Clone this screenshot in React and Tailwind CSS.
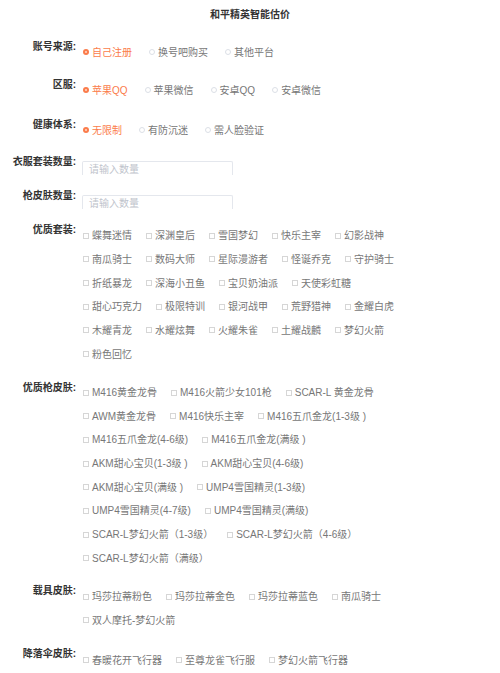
import React from 'react';

const font = { fontFamily: '"Liberation Sans", "Noto Sans CJK SC", sans-serif' };

const sections = {
  suits: ['蝶舞迷情', '深渊皇后', '雪国梦幻', '快乐主宰', '幻影战神', '南瓜骑士', '数码大师', '星际漫游者', '怪诞乔克', '守护骑士', '折纸暴龙', '深海小丑鱼', '宝贝奶油派', '天使彩虹糖', '甜心巧克力', '极限特训', '银河战甲', '荒野猎神', '金耀白虎', '木耀青龙', '水耀炫舞', '火耀朱雀', '土耀战麟', '梦幻火箭', '粉色回忆'],
  guns: ['M416黄金龙骨', 'M416火箭少女101枪', 'SCAR-L 黄金龙骨', 'AWM黄金龙骨', 'M416快乐主宰', 'M416五爪金龙(1-3级 )', 'M416五爪金龙(4-6级)', 'M416五爪金龙(满级 )', 'AKM甜心宝贝(1-3级 )', 'AKM甜心宝贝(4-6级)', 'AKM甜心宝贝(满级 )', 'UMP4雪国精灵(1-3级)', 'UMP4雪国精灵(4-7级)', 'UMP4雪国精灵(满级)', 'SCAR-L梦幻火箭（1-3级）', 'SCAR-L梦幻火箭（4-6级）', 'SCAR-L梦幻火箭（满级）'],
  cars: ['玛莎拉蒂粉色', '玛莎拉蒂金色', '玛莎拉蒂蓝色', '南瓜骑士', '双人摩托-梦幻火箭'],
  chutes: ['春暖花开飞行器', '至尊龙雀飞行服', '梦幻火箭飞行器'],
};

function Label({ children }) {
  return (
    <div className="w-[76px] shrink-0 text-right font-bold text-[10px] leading-[14px] text-[#333]">{children}</div>
  );
}

function Radio({ label, checked }) {
  return (
    <div className="flex items-center h-[24px] mr-[17px]">
      {checked ? (
        <span className="w-[6px] h-[6px] rounded-full bg-[#fb7c4b] flex items-center justify-center">
          <span className="w-[2px] h-[2px] rounded-full bg-[#ffd9c8]" />
        </span>
      ) : (
        <span className="w-[6px] h-[6px] rounded-full border border-[#dcdfe6] bg-white" />
      )}
      <span className={`ml-[3px] text-[10px] ${checked ? 'text-[#fb7c4b]' : 'text-[#777]'}`}>{label}</span>
    </div>
  );
}

function Check({ label }) {
  return (
    <div className="flex items-center h-[23.65px] mr-[14px]">
      <span className="w-[6px] h-[6px] border border-[#d6d6d6] bg-white" />
      <span className="ml-[3px] text-[10px] text-[#777] whitespace-nowrap">{label}</span>
    </div>
  );
}

function Input() {
  return (
    <div className="mt-[6px] w-[151px] h-[14px] overflow-hidden border border-b-0 border-[#e4e7ed] rounded-t-[2px] pl-[6px] pt-[1px]">
      <div className="text-[10px] leading-[13px] text-[#c0c4cc]">请输入数量</div>
    </div>
  );
}

export default function App() {
  return (
    <div className="w-[500px] h-[673px] bg-white overflow-hidden" style={font}>
      <div className="pt-[8px] text-center font-bold text-[10px] leading-[14px] text-[#333]">和平精英智能估价</div>

      <div className="flex mt-[18px]">
        <Label>账号来源:</Label>
        <div className="ml-[7px] flex">
          <Radio label="自己注册" checked />
          <Radio label="换号吧购买" />
          <Radio label="其他平台" />
        </div>
      </div>

      <div className="flex mt-[14px]">
        <Label>区服:</Label>
        <div className="ml-[7px] flex">
          <Radio label="苹果QQ" checked />
          <Radio label="苹果微信" />
          <Radio label="安卓QQ" />
          <Radio label="安卓微信" />
        </div>
      </div>

      <div className="flex mt-[16px]">
        <Label>健康体系:</Label>
        <div className="ml-[7px] flex">
          <Radio label="无限制" checked />
          <Radio label="有防沉迷" />
          <Radio label="需人脸验证" />
        </div>
      </div>

      <div className="flex mt-[13px]">
        <Label>衣服套装数量:</Label>
        <div className="ml-[6px]">
          <Input />
        </div>
      </div>

      <div className="flex mt-[14px]">
        <Label>枪皮肤数量:</Label>
        <div className="ml-[6px]">
          <Input />
        </div>
      </div>

      <div className="flex mt-[14px]">
        <Label>优质套装:</Label>
        <div className="ml-[7px] pt-[1px] w-[335px] flex flex-wrap">
          {sections.suits.map(s => <Check key={s} label={s} />)}
        </div>
      </div>

      <div className="flex mt-[15px]">
        <Label>优质枪皮肤:</Label>
        <div className="ml-[7px] pt-[0px] w-[335px] flex flex-wrap">
          {sections.guns.map(s => <Check key={s} label={s} />)}
        </div>
      </div>

      <div className="flex mt-[14px]">
        <Label>载具皮肤:</Label>
        <div className="ml-[7px] pt-[1px] w-[335px] flex flex-wrap">
          {sections.cars.map(s => <Check key={s} label={s} />)}
        </div>
      </div>

      <div className="flex mt-[15px]">
        <Label>降落伞皮肤:</Label>
        <div className="ml-[7px] pt-[1px] w-[335px] flex flex-wrap">
          {sections.chutes.map(s => <Check key={s} label={s} />)}
        </div>
      </div>
    </div>
  );
}
